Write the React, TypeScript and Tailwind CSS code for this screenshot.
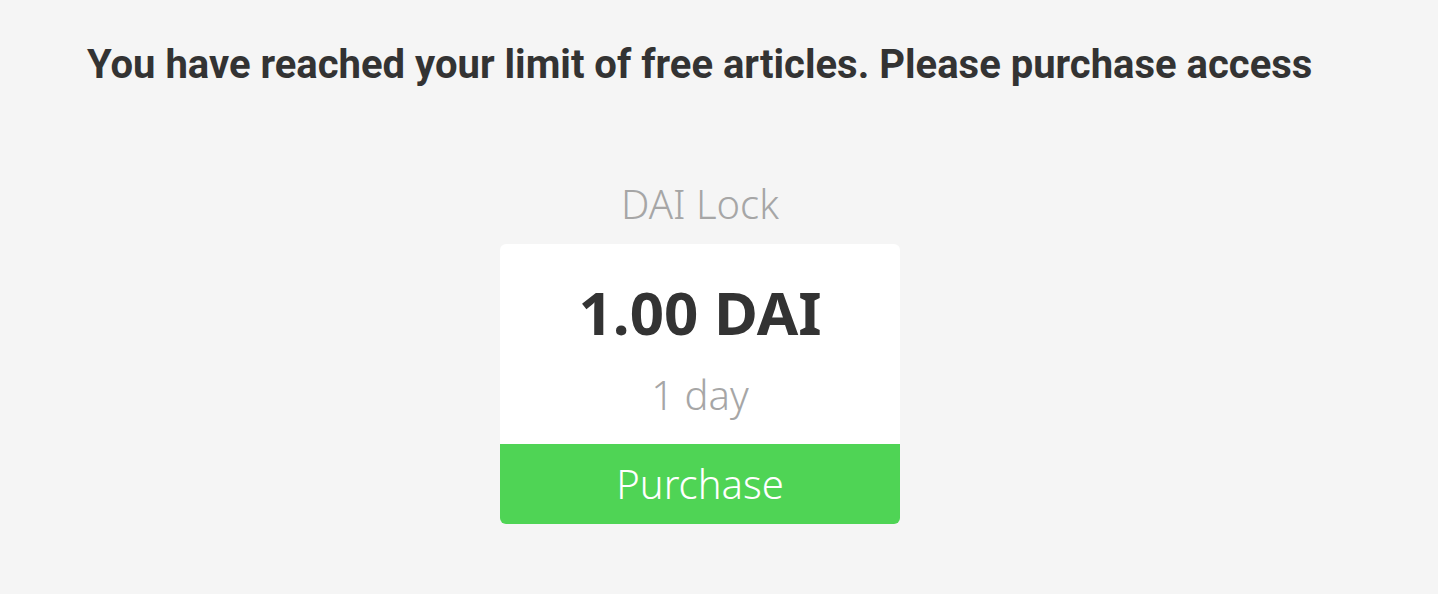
export default function App() {
  return (
    <div className="min-h-[594px] bg-[#f5f5f5] pl-[87px] pt-[41px]">
      <div className="w-[1226px] flex flex-col items-center">
        <h1 className="self-start text-[40px] leading-[48px] font-bold text-[#333333] font-['Roboto',sans-serif] whitespace-nowrap">
          You have reached your limit of free articles. Please purchase access
        </h1>

        <div className="mt-[93px] flex flex-col items-center font-['Noto_Sans',sans-serif]">
          <p className="text-[40px] leading-[44px] font-light text-[#a6a6a6]">DAI Lock</p>
          <div className="mt-[18px] w-[400px] rounded-[6px] bg-white overflow-hidden flex flex-col">
            <div className="h-[200px] flex flex-col items-center">
              <span className="mt-[28px] text-[60px] leading-[80px] font-bold text-[#333333]">1.00 DAI</span>
              <span className="mt-[18px] text-[40px] leading-[50px] font-light text-[#a6a6a6]">1 day</span>
            </div>
            <button className="h-[80px] bg-[#4fd455] text-white text-[40px] font-light">Purchase</button>
          </div>
        </div>
      </div>
    </div>
  );
}
